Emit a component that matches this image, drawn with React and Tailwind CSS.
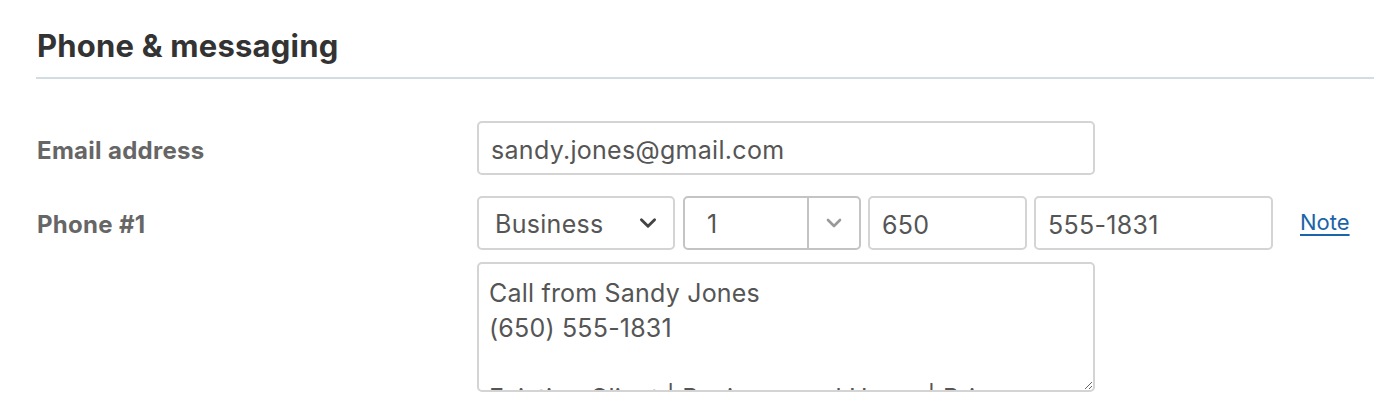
import React from "react";

function Chevron({ className }) {
  return (
    <svg viewBox="0 0 20 20" className={className} fill="none" stroke="currentColor" strokeWidth="2.6" strokeLinecap="round" strokeLinejoin="round">
      <path d="M4 7l6 6 6-6" />
    </svg>
  );
}

export default function App() {
  return (
    <div className="bg-white w-[1374px] h-[408px] overflow-hidden font-['Inter',sans-serif]">
      <div className="pl-9 pt-[27px]">
        <h2 className="text-[31px] leading-[38px] font-bold text-[#333] pl-px tracking-[0.2px]">Phone &amp; messaging</h2>
        <div className="mt-[12px] h-[2px] bg-[#d3dce0]" />

        <div className="mt-[42px] flex items-center">
          <div className="w-[441px] pt-[5px] text-[24px] font-bold text-[#666] pl-px tracking-[0.3px]">Email address</div>
          <input
            readOnly
            value="sandy.jones@gmail.com"
            className="w-[618px] h-[54px] border-2 border-[#d4d4d4] rounded-[5px] px-[12px] pt-[4px] text-[25px] tracking-[0.3px] text-[#555] outline-none"
          />
        </div>

        <div className="mt-[21px] flex items-start">
          <div className="w-[441px] h-[54px] pt-[4px] flex items-center text-[24px] font-bold text-[#666] pl-px tracking-[0.3px]">Phone #1</div>
          <div className="flex flex-col gap-[12px]">
            <div className="flex items-center">
              <div className="w-[198px] h-[54px] border-2 border-[#d4d4d4] rounded-[5px] pl-[16px] pr-[14px] flex items-center justify-between text-[25px] tracking-[0.3px] text-[#555]">
                <span className="pt-[4px]">Business</span>
                <Chevron className="w-[22px] h-[22px] text-[#444]" />
              </div>
              <div className="ml-[8px] w-[178px] h-[54px] border-2 border-[#c4c4c4] rounded-[5px] flex text-[25px] text-[#555]">
                <div className="flex-1 flex items-center pl-[22px] pt-[4px]">1</div>
                <div className="w-[52px] border-l-2 border-[#c4c4c4] flex items-center justify-center">
                  <Chevron className="w-[20px] h-[20px] text-[#999]" />
                </div>
              </div>
              <input
                readOnly
                value="650"
                className="ml-[7px] w-[159px] h-[54px] border-2 border-[#d4d4d4] rounded-[5px] px-[12px] pt-[4px] text-[25px] tracking-[0.3px] text-[#555] outline-none"
              />
              <input
                readOnly
                value="555-1831"
                className="ml-[7px] w-[239px] h-[54px] border-2 border-[#d4d4d4] rounded-[5px] px-[12px] pt-[4px] text-[25px] tracking-[0.3px] text-[#555] outline-none"
              />
              <a href="#" className="ml-[27px] text-[22px] text-[#1b64a8] underline underline-offset-[4px] -mt-[2px]">Note</a>
            </div>
            <textarea
              readOnly
              value={"Call from Sandy Jones\n(650) 555-1831\n\nExisting Client | Business and Home | Primary"}
              className="w-[618px] h-[130px] border-2 border-[#d4d4d4] rounded-[5px] px-[10px] pt-[12px] text-[25px] tracking-[0.2px] leading-[35px] text-[#555] outline-none resize-y overflow-hidden"
            />
          </div>
        </div>
      </div>
    </div>
  );
}
